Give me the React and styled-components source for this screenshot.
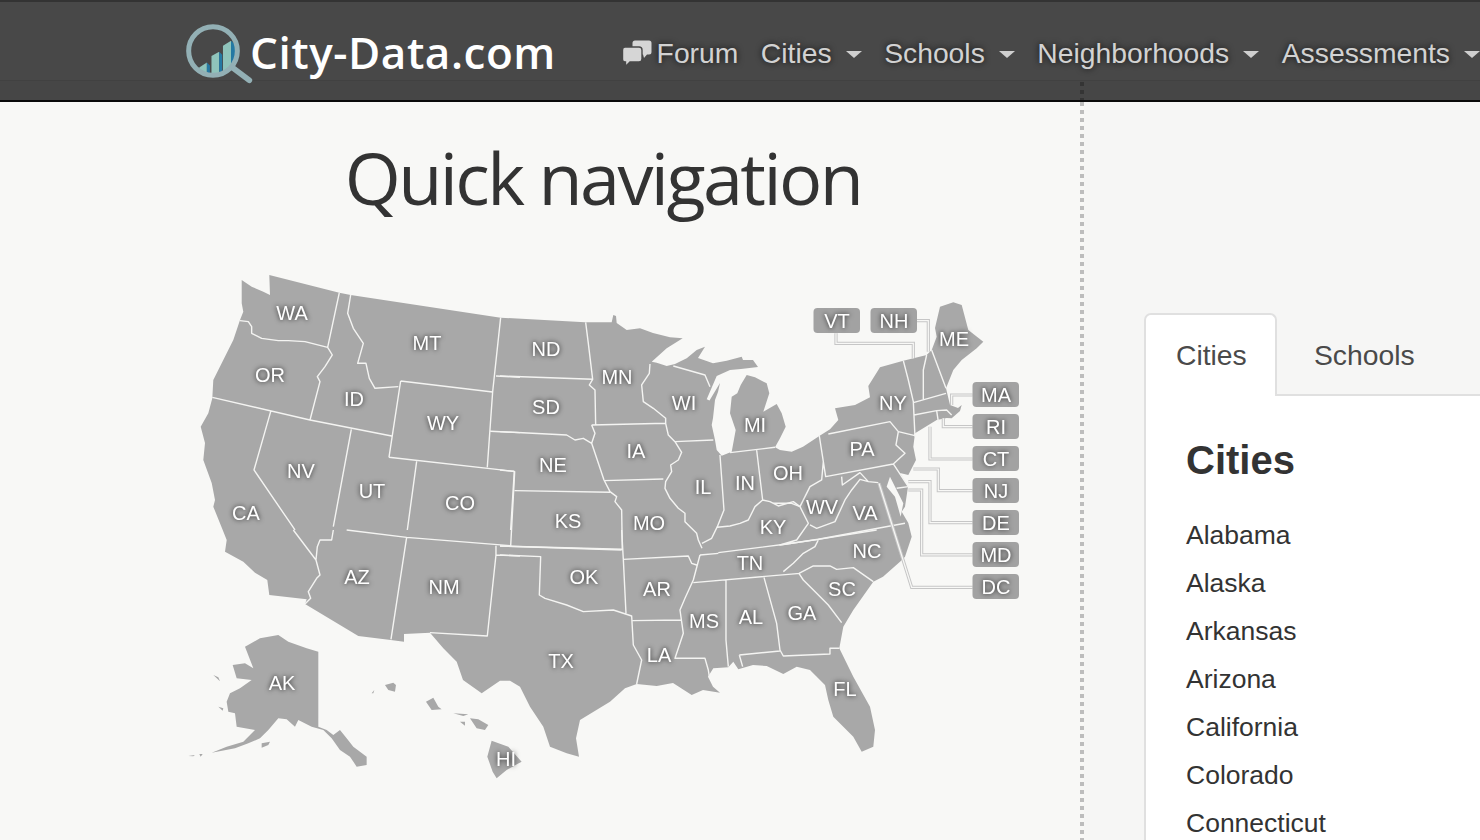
import React from 'react';
import styled, { createGlobalStyle } from 'styled-components';

const GlobalStyle = createGlobalStyle`
  html, body { margin: 0; padding: 0; background: #f8f8f6; }
  body { font-family: "Liberation Sans", Arial, sans-serif; overflow: hidden; }
`;

const Page = styled.div`
  position: relative;
  width: 1480px;
  height: 840px;
  overflow: hidden;
`;

// Header
const Header = styled.header`
  position: relative;
  box-sizing: border-box;
  height: 102px;
  padding-left: 180px;
  display: flex;
  align-items: flex-start;
  background: linear-gradient(#484848 0, #484848 78px, #414141 78px, #414141 79px, #464646 79px);
  border-top: 2px solid #333;
  border-bottom: 2px solid #0a0a0a;
`;

const Logo = styled.a`
  display: flex;
  align-items: flex-start;
  width: 442px;
  padding-top: 13px;
  color: #fff;
  text-decoration: none;
`;

const LogoText = styled.span`
  font-family: "Open Sans", sans-serif;
  font-weight: 600;
  font-size: 44px;
  line-height: 50px;
  margin: 12px 0 0 -2px;
  letter-spacing: 0.55px;
`;

const Nav = styled.nav`
  display: flex;
  align-items: center;
  gap: 22.5px;
  height: 100px;
  margin-top: 1px;
  white-space: nowrap;
`;

const NavItem = styled.a`
  display: flex;
  align-items: center;
  gap: ${(p) => (p.$icon ? '5px' : '14px')};
  color: #d2d2d2;
  font-size: 28.3px;
  line-height: 34px;
  text-shadow: 0 0 6px rgba(0, 0, 0, 0.8);
`;

const Caret = styled.span`
  width: 0;
  height: 0;
  margin-top: 3px;
  border-left: 8px solid transparent;
  border-right: 8px solid transparent;
  border-top: 7px solid #cfcfcf;
`;

const HeaderDots = styled.div`
  position: absolute;
  left: 1080px;
  top: 80px;
  width: 4px;
  height: 18px;
  background: repeating-linear-gradient(#343434 0, #343434 4px, transparent 4px, transparent 8px);
`;

// Body columns
const Main = styled.main`
  display: grid;
  grid-template-columns: 1080px 4px 1fr;
  height: 738px;
`;

const MapColumn = styled.section`
  background: #f8f8f6;
`;

const Title = styled.h1`
  margin: 30px 0 0 126px;
  text-align: center;
  font-family: "Open Sans", sans-serif;
  font-weight: 400;
  font-size: 72px;
  line-height: 90px;
  letter-spacing: -2.6px;
  color: #333;
`;

const MapSvg = styled.svg`
  display: block;
  width: 850px;
  height: 520px;
  margin: 48px 0 0 180px;
  overflow: visible;
`;

const Land = styled.path`
  fill: #a8a8a8;
`;

const Border = styled.path`
  fill: none;
  stroke: #f4f4f2;
  stroke-width: 1.4px;
  stroke-linejoin: round;
  vector-effect: non-scaling-stroke;
`;

const Water = styled.path`
  fill: #f8f8f6;
`;

const LeaderOuter = styled.path`
  fill: none;
  stroke: #c6c6c6;
  stroke-width: 3.2px;
  vector-effect: non-scaling-stroke;
`;

const LeaderInner = styled.path`
  fill: none;
  stroke: #f8f8f6;
  stroke-width: 1.2px;
  vector-effect: non-scaling-stroke;
`;

const TagBox = styled.rect`
  fill: #a2a2a2;
`;

const StateLabel = styled.text`
  fill: #fff;
  font-family: "Liberation Sans", Arial, sans-serif;
  font-size: 20px;
  text-anchor: middle;
  dominant-baseline: central;
  filter: drop-shadow(0 0 2.5px rgba(0, 0, 0, 0.8));
`;

const Divider = styled.div`
  background: repeating-linear-gradient(#bdbdbd 0, #bdbdbd 4px, transparent 4px, transparent 8px);
`;

const SidePanel = styled.aside`
  background: #f6f6f5;
  padding: 211px 0 0 60px;
`;

const Tabs = styled.div`
  display: flex;
  height: 83px;
  box-sizing: border-box;
  border-bottom: 2px solid #e0e0e0;
`;

const Tab = styled.div`
  box-sizing: border-box;
  height: 83px;
  padding: 0 ${(p) => (p.$active ? '30px' : '37px')};
  line-height: ${(p) => (p.$active ? '80px' : '84px')};
  font-size: 28.3px;
  color: #4a4a4a;
  ${(p) => p.$active && `
    width: 133px;
    background: #fff;
    border: 2px solid #e0e0e0;
    border-bottom: 0;
    border-radius: 7px 7px 0 0;
  `}
`;

const TabPane = styled.div`
  background: #fff;
  border-left: 2px solid #e0e0e0;
  height: 460px;
  padding: 38px 0 0 40px;
`;

const PaneTitle = styled.h2`
  margin: 0 0 25px;
  font-size: 40px;
  line-height: 52px;
  font-weight: 700;
  color: #333;
`;

const CityList = styled.ul`
  margin: 0;
  padding: 0;
  list-style: none;
`;

const City = styled.li`
  font-size: 26.5px;
  line-height: 48px;
  color: #333;
`;

const CITIES = ['Alabama', 'Alaska', 'Arkansas', 'Arizona', 'California', 'Colorado', 'Connecticut'];

// coast, clockwise from the Washington corner, page coordinates
const MAINLAND = `M269.3 275 L339.3 292.7 L350.7 295 L500.7 317.7 L585 322.3 L611.7 322.3 L613.3 315 L616 316 L616.7 323
L626.7 330 L640 328.3 L653 333 L670 337.3 L682.7 338.3 L666.7 348.3 L651.7 361.7 L656.7 362.7 L666.7 366 L675 364
L686.7 358.3 L696.7 350 L705 346.7 L698 358 L713 363.3 L726.7 360.7 L741.7 356.7 L743 360 L753 360 L758 367 L741 369 L730 370
L716.7 376 L706.7 399.3 L709.5 400.5 L720 383 L718 392 L715 400 L713 418 L711.7 425 L715 440 L716.7 450 L721.7 455.7 L731.7 451.7
L735.7 430 L730 413.3 L731.7 396.7 L737.3 393.3 L740.7 385 L746.7 375 L755 377.3 L766.7 383.3 L769.3 393.3 L763.3 411.7
L776.7 404 L781.7 413.3 L785.7 426.7 L780 438.3 L775 447.3 L780 450 L791.7 451.7 L803 446.7 L819.3 436 L830 429.3 L838.3 420
L835 408.3 L855 405 L870 397.3 L868.3 386 L880 367.3 L903.3 360.7 L926.7 355 L931.7 350 L936.7 336.7 L935 328 L940 306.7
L953.3 302.3 L961.7 305 L968.3 330 L983.3 341.7 L976.7 348.3 L961.7 360 L953.3 370 L946 388.3 L950 405 L958 408 L961.7 405
L960 411 L951.7 418.3 L946.7 418 L936.7 420 L915 433.3 L913.3 446.7 L916 460 L908.3 475 L900 473 L908 486.7 L905 506.7
L901.7 511.7 L908.3 523 L911.7 536.7 L905 556.7 L900 561.7 L883 576.7 L873.3 581.7 L853.3 610 L843.3 626.7 L839.3 648.3
L853.3 676.7 L870 706.7 L875 730 L873.3 746.7 L861.7 751.7 L853.3 736.7 L833.3 716.7 L828.3 700 L825 685 L810 670 L796.7 666.7
L783.3 674 L766.7 666 L753 665 L738.3 669.3 L733.3 661.7 L728.3 667.3 L713.3 668.3 L708 676.7 L713 686.7 L720 692.7 L703 690
L691.7 695 L673 683 L656.7 686 L636.7 684 L625 688.3 L610 701.7 L580 720 L576 738.3 L579 756.7 L566.7 753.3 L550 746.7 L543.3 726.7
L530 706.7 L520 686.7 L510 680.7 L500 680.7 L481.7 693.3 L463 680 L456.7 661.7 L443.3 648.3 L430 632.7 L404 634 L404 641.7
L390.7 640 L358.3 636 L305 604 L306.7 599.3 L269.3 595 L267.3 580 L255 572.7 L243.3 561.7 L225 551.7 L226.7 540 L222.7 530
L213.3 506.7 L215 500 L211.7 483 L203.3 460 L205 443 L200.7 426.7 L208.3 413.3 L212.3 398.3 L213.3 380 L223.3 360 L233.3 340
L240 320 L243.3 311.7 L241.7 303.3 L241.7 280 L251.7 286.7 L263.3 291.7 L270 295 Z`;

// traced from crops, each group in its own 3x coordinates
const WEST = `M478 68 L443 232 M180 152 L205 155 L215 170 L215 190 L245 205 L295 212 L325 212 L375 215 L443 232
M443 232 L457 255 L435 290 L412 320 L420 335 L390 450
M512 75 L503 130 L520 175 L550 220 L533 280 L558 280 L568 325 L585 355 L655 350
M662 333 L627 562 M662 333 L938 366 M962 143 L938 366 L922 592 M627 562 L1003 604
M97 382 L390 450 L635 498 M272 425 L222 600 L345 780 M514 478 L460 770 M710 574 L682 780 M1003 604 L992 780
M948 318 L1020 322 M932 484 L1020 488`;

const MIDWEST = `M0 258 L278 268 M0 425 L200 435 L225 450 L250 445 L275 460
M0 540 L44 545 L32 768 M44 602 L330 607 M0 768 L365 778
M257 97 L265 160 L278 268 L268 285 L285 300 L287 403 M275 405 L497 400
M275 405 L285 430 L275 460 L312 570 L330 605 L350 620 L345 635 L365 660 L367 780 M312 572 L490 567
M450 222 L448 250 L425 285 L430 335 L460 355 L497 385 L497 400 L505 435 L525 455 L545 487 L535 510 L512 525 L515 545 L497 575
L495 595 L510 625 L535 655 L555 670 L555 695 L590 730 L595 750 L606 775
M525 455 L640 450 M520 228 L615 255 L630 290
M660 495 L672 660 L652 710 L635 745 L606 760 M690 488 L825 472 M770 480 L788 630
M652 712 L690 708 L720 700 L745 690 L765 650 L788 630 L810 635 L835 648 L880 635 L900 650`;

const NORTHEAST = `M60 650 L75 620 L90 590 L125 570 L130 515 L118 438 L137 560 L340 522
M-20 640 L35 640 L60 650 L85 700 L50 750 L0 765 L115 748 L375 700
M185 560 L187 585 L240 548 L265 575 L295 578 M90 705 L110 715 L165 695 L195 630 L215 600 L240 568 L265 575
M370 212 L385 270 L400 335 L405 440 M145 432 L330 395 L355 425 L405 437 M355 425 L348 465 L375 490 L340 522
M440 195 L430 240 L430 330 M455 180 L498 295 M400 338 L498 310 M402 375 L470 362 L500 360 L515 375 M470 362 L475 395
M340 522 L385 590 L350 595`;

const SOUTH = `M655 68 L860 42 L955 28 L1130 0 M600 75 L655 70 M955 30 L945 50 L910 70 L880 100 L850 125
M580 158 L900 130 M897 130 L910 150 L950 190 L985 225 L1025 278 M897 130 L940 108 L990 108 L1010 118 L1060 113 L1120 155
M600 75 L580 150 L555 205 L540 240 L550 310 L525 385 L615 385 L625 420 L628 440
M370 88 L565 78 L575 100 L590 105 M365 0 L370 88 L378 250 M0 48 L365 60
M0 75 L122 80 L118 195 L135 205 L200 225 L250 245 L340 240 L395 258 L400 345 L425 390 L410 462
M398 272 L543 270 M678 150 L678 330 L685 410 M792 142 L830 280 L840 360 L850 378 L990 372 L990 355 L1018 355
M718 375 L840 363 M718 375 L728 410`;

const SOUTHWEST = `M340 0 L408 90 L420 135 L410 145 L385 185 L392 205 L375 222 M460 0 L455 30 L420 30 L412 50 L408 90
M500 0 L680 22 L990 47 M680 22 L633 328 M948 47 L948 75 L922 318 L750 308 M948 75 L1020 78`;

const ALASKA = `M415 365 L415 590 L440 600 L460 615 L480 600 L500 625 L520 650 L560 680 L560 705 L530 710 L510 680 L480 660 L455 625
L430 600 L395 590 L355 570 L345 590 L320 568 L295 565 L265 600 L240 625 L205 640 L165 655 L95 668 L140 650 L190 635 L225 600
L170 590 L165 550 L145 545 L140 515 L150 490 L180 475 L215 450 L170 445 L158 405 L195 400 L220 415 L195 350 L240 325 L295 315
L325 335 L380 355 Z M115 530 L130 535 L128 542 Z M100 435 L115 442 L120 454 Z M245 640 L270 635 L265 645 L245 653 Z
M58 672 L68 672 L62 680 Z M25 678 L45 675 L40 679 Z`;

const HAWAII = `M615 465 L640 458 L648 465 L645 485 L625 480 Z M575 490 L583 480 L580 490 Z
M738 515 L760 503 L775 530 L785 538 L755 540 Z M820 550 L865 553 L850 558 Z M840 575 L855 575 L855 587 Z
M870 565 L895 568 L925 585 L915 600 L890 595 Z M935 632 L985 650 L1025 695 L980 720 L950 745 L938 725 L922 680 Z`;

const LEADERS = `M168 130 L168 160 L400 160 L400 205 M410 92 L445 92 L445 185 M578 315 L515 315 L515 345
M578 410 L490 410 L490 385 M578 507 L450 507 L450 410 M578 602 L475 602 L475 537 L400 537
M578 698 L450 698 L450 575 L385 575 M578 795 L425 795 L425 600 L385 600 M578 892 L395 892 L297 580`;

const STATES = [
  ['WA', 292, 313], ['OR', 270, 375], ['ID', 354, 399], ['MT', 427, 343], ['WY', 443, 423], ['NV', 301, 471],
  ['CA', 246, 513], ['UT', 372, 491], ['CO', 460, 503], ['AZ', 357, 577], ['NM', 444, 587], ['ND', 546, 349],
  ['SD', 546, 407], ['NE', 553, 465], ['KS', 568, 521], ['OK', 584, 577], ['TX', 561, 661], ['MN', 617, 377],
  ['IA', 636, 451], ['MO', 649, 523], ['AR', 657, 589], ['LA', 659, 655], ['WI', 684, 403], ['IL', 703, 487],
  ['IN', 745, 483], ['MI', 755, 425], ['OH', 788, 473], ['KY', 773, 527], ['TN', 750, 563], ['MS', 704, 621],
  ['AL', 751, 617], ['GA', 802, 613], ['FL', 845, 689], ['SC', 842, 589], ['NC', 867, 551], ['VA', 865, 513],
  ['WV', 822, 507], ['PA', 862, 449], ['NY', 893, 403], ['ME', 954, 339], ['AK', 282, 683], ['HI', 506, 759],
];

const TAGS = [
  ['VT', 813.5, 308], ['NH', 870.5, 308], ['MA', 972.5, 382], ['RI', 972.5, 414], ['CT', 972.5, 446],
  ['NJ', 972.5, 478], ['DE', 972.5, 510], ['MD', 972.5, 542], ['DC', 972.5, 574],
];

function UsMap() {
  return (
    <MapSvg viewBox="180 270 850 520">
      <Land d={MAINLAND} />
      <g transform="translate(780 290) scale(.3333)">
        <Water d="M405 462 L470 425 L465 435 L415 462 Z" />
        <Water d="M330 560 L320 590 L345 620 L362 680 L370 640 L350 600 Z" />
      </g>
      <g transform="translate(180 270) scale(.3333)"><Border d={WEST} /></g>
      <g transform="translate(500 290) scale(.3333)"><Border d={MIDWEST} /></g>
      <g transform="translate(780 290) scale(.3333)">
        <Border d={NORTHEAST} />
        <LeaderOuter d={LEADERS} />
        <LeaderInner d={LEADERS} />
      </g>
      <g transform="translate(500 530) scale(.3333)"><Border d={SOUTH} /></g>
      <g transform="translate(180 530) scale(.3333)">
        <Border d={SOUTHWEST} />
        <Land d={ALASKA} />
        <Land d={HAWAII} />
      </g>
      {TAGS.map(([name, x, y]) => (
        <TagBox key={name} x={x} y={y} width="46.5" height="25" rx="4" />
      ))}
      {STATES.map(([name, x, y]) => (
        <StateLabel key={name} x={x} y={y}>{name}</StateLabel>
      ))}
      {TAGS.map(([name, x, y]) => (
        <StateLabel key={name} x={x + 23.5} y={y + 13}>{name}</StateLabel>
      ))}
    </MapSvg>
  );
}

function LogoMark() {
  return (
    <svg width="72" height="75" viewBox="0 0 216 225" style={{ flex: 'none', overflow: 'visible' }}>
      <defs>
        <clipPath id="lens"><circle cx="99" cy="108" r="68" /></clipPath>
      </defs>
      <g clipPath="url(#lens)">
        <g transform="translate(99 108) scale(1.15) translate(-88 -92)">
          <path d="M52 135 L72 122 L72 165 L52 165 Z" fill="#8fc4bb" />
          <path d="M72 122 L80 130 L80 165 L72 165 Z" fill="#2579a3" />
          <path d="M84 105 L104 94 L104 165 L84 165 Z" fill="#8fc4bb" />
          <path d="M104 94 L112 102 L112 165 L104 165 Z" fill="#2579a3" />
          <path d="M114 78 L135 65 L135 165 L114 165 Z" fill="#8fc4bb" />
          <path d="M135 65 L158 85 L158 165 L135 165 Z" fill="#2579a3" />
        </g>
      </g>
      <circle cx="99" cy="108" r="73" fill="none" stroke="#93b0b5" strokeWidth="15" />
      <path d="M158 158 L208 196" stroke="#93b0b5" strokeWidth="17" strokeLinecap="round" />
    </svg>
  );
}

function ChatIcon() {
  return (
    <svg width="30" height="27" viewBox="0 0 30 27">
      <path d="M13 0.5 H27 Q29.5 0.5 29.5 3 V12 Q29.5 14.5 27 14.5 H25 L22 18 L21 14.5 H13 Q10.5 14.5 10.5 12 V3 Q10.5 0.5 13 0.5 Z" fill="#d6d6d6" />
      <path d="M3 7 H17 Q20 7 20 10 V19 Q20 22 17 22 H8 L3.5 26.5 L3.5 22 H3 Q0.5 22 0.5 19 V10 Q0.5 7 3 7 Z" fill="#d6d6d6" stroke="#484848" strokeWidth="1.4" />
    </svg>
  );
}

export default function App() {
  return (
    <Page>
      <GlobalStyle />
      <Header>
        <Logo>
          <LogoMark />
          <LogoText>City-Data.com</LogoText>
        </Logo>
        <Nav>
          <NavItem $icon><ChatIcon />Forum</NavItem>
          <NavItem>Cities<Caret /></NavItem>
          <NavItem>Schools<Caret /></NavItem>
          <NavItem>Neighborhoods<Caret /></NavItem>
          <NavItem>Assessments<Caret /></NavItem>
        </Nav>
        <HeaderDots />
      </Header>
      <Main>
        <MapColumn>
          <Title>Quick navigation</Title>
          <UsMap />
        </MapColumn>
        <Divider />
        <SidePanel>
          <Tabs>
            <Tab $active>Cities</Tab>
            <Tab>Schools</Tab>
          </Tabs>
          <TabPane>
            <PaneTitle>Cities</PaneTitle>
            <CityList>
              {CITIES.map((city) => <City key={city}>{city}</City>)}
            </CityList>
          </TabPane>
        </SidePanel>
      </Main>
    </Page>
  );
}
